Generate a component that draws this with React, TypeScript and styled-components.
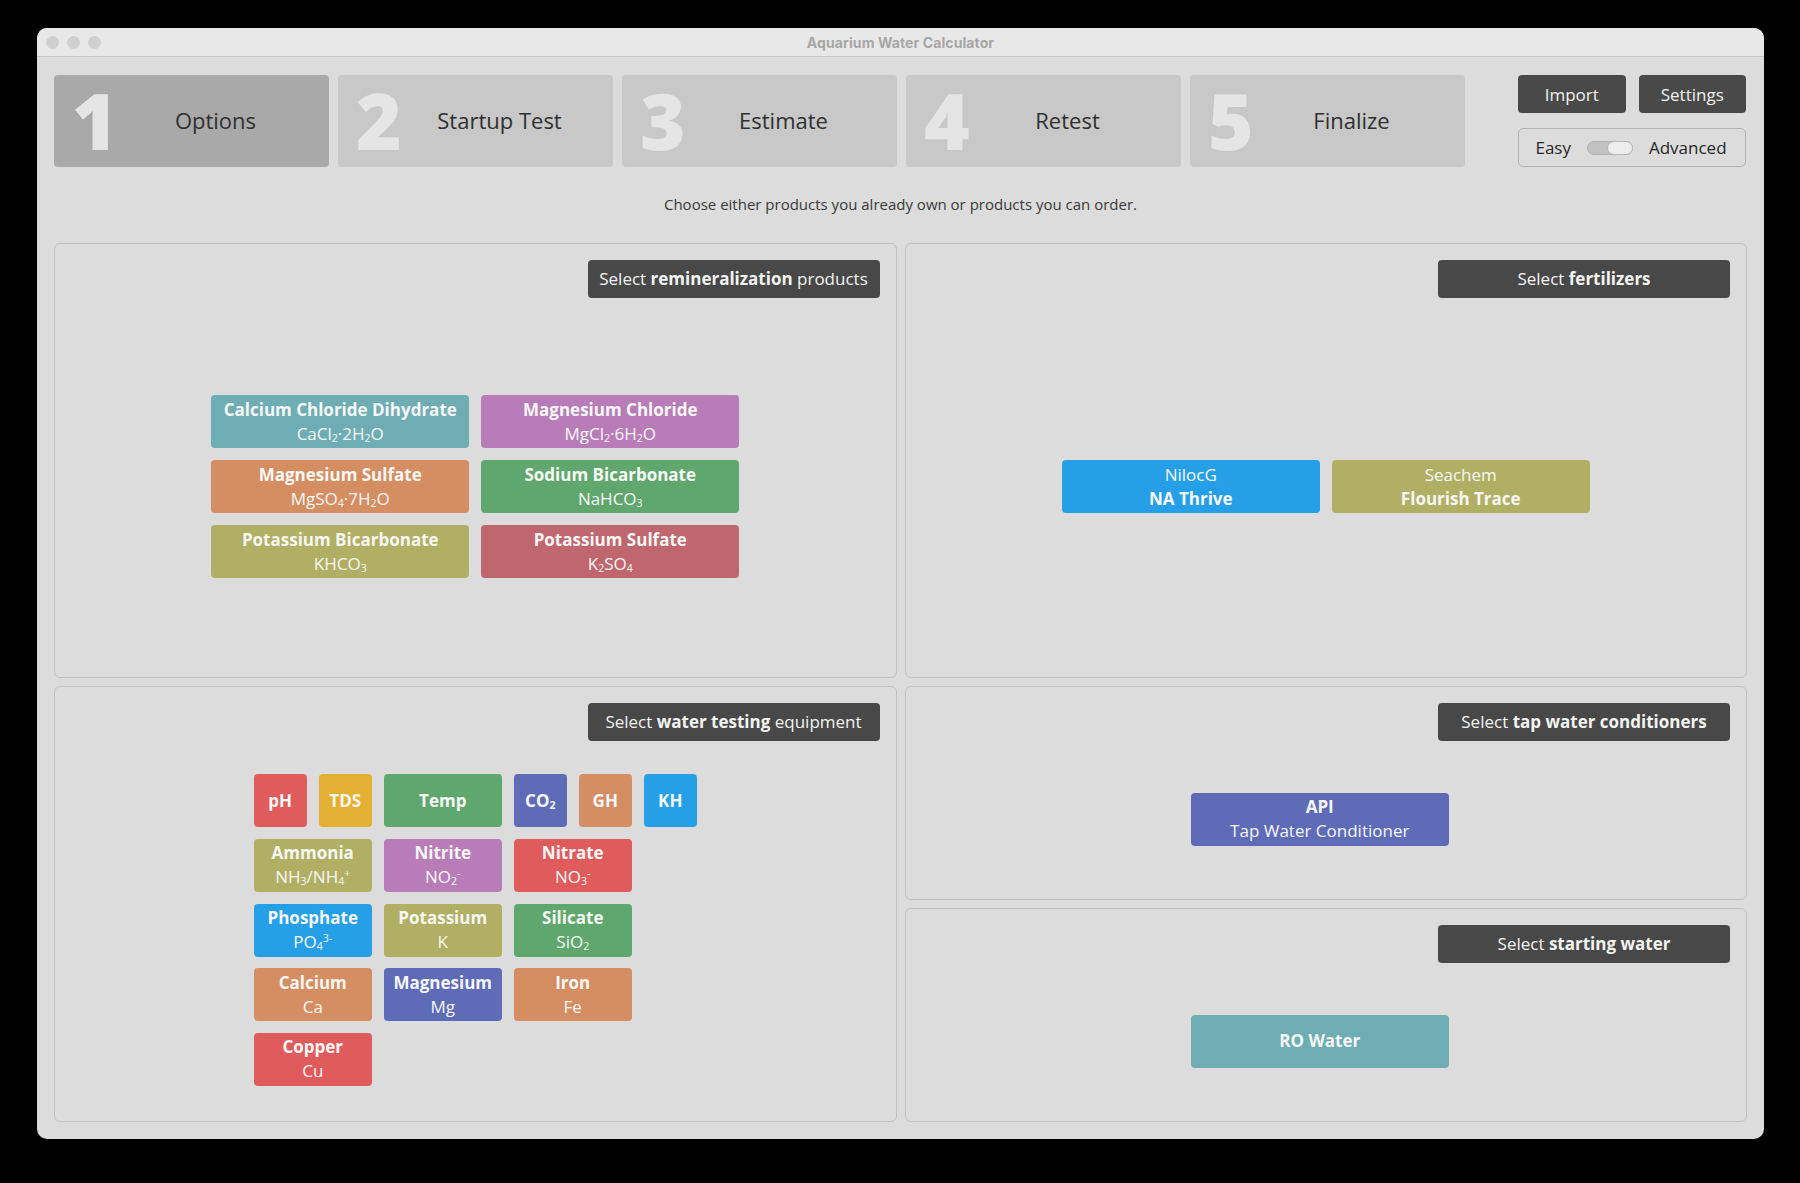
import styled, { createGlobalStyle } from 'styled-components';

const GlobalStyle = createGlobalStyle`
  html, body {
    margin: 0;
    padding: 0;
    background: #000;
  }
  body {
    font-family: "Open Sans", "Noto Sans", sans-serif;
    -webkit-font-smoothing: antialiased;
  }
`;

const palette = {
  teal: '#6eadb4',
  purple: '#b87db8',
  orange: '#d48e62',
  green: '#60a76e',
  olive: '#b1af63',
  rose: '#c0666e',
  red: '#e05c5c',
  yellow: '#e4b032',
  indigo: '#5e6bb7',
  blue: '#25a0e8',
};

type Chip = {
  title: React.ReactNode;
  sub?: React.ReactNode;
  color: string;
  span?: number;
  subFirst?: boolean;
};

const steps = ['Options', 'Startup Test', 'Estimate', 'Retest', 'Finalize'];

const Sub = styled.sub`
  font-size: 0.62em;
  vertical-align: -0.2em;
  line-height: 0;
`;

const Sup = styled.sup`
  font-size: 0.62em;
  vertical-align: 0.55em;
  line-height: 0;
`;

const remineralization: Chip[] = [
  { title: 'Calcium Chloride Dihydrate', sub: <>CaCl<Sub>2</Sub>·2H<Sub>2</Sub>O</>, color: palette.teal },
  { title: 'Magnesium Chloride', sub: <>MgCl<Sub>2</Sub>·6H<Sub>2</Sub>O</>, color: palette.purple },
  { title: 'Magnesium Sulfate', sub: <>MgSO<Sub>4</Sub>·7H<Sub>2</Sub>O</>, color: palette.orange },
  { title: 'Sodium Bicarbonate', sub: <>NaHCO<Sub>3</Sub></>, color: palette.green },
  { title: 'Potassium Bicarbonate', sub: <>KHCO<Sub>3</Sub></>, color: palette.olive },
  { title: 'Potassium Sulfate', sub: <>K<Sub>2</Sub>SO<Sub>4</Sub></>, color: palette.rose },
];

const fertilizers: Chip[] = [
  { title: 'NA Thrive', sub: 'NilocG', color: palette.blue, subFirst: true },
  { title: 'Flourish Trace', sub: 'Seachem', color: palette.olive, subFirst: true },
];

const testing: Chip[] = [
  { title: 'pH', color: palette.red },
  { title: 'TDS', color: palette.yellow },
  { title: 'Temp', color: palette.green, span: 2 },
  { title: <>CO<Sub>2</Sub></>, color: palette.indigo },
  { title: 'GH', color: palette.orange },
  { title: 'KH', color: palette.blue },
  { title: 'Ammonia', sub: <>NH<Sub>3</Sub>/NH<Sub>4</Sub><Sup>+</Sup></>, color: palette.olive, span: 2 },
  { title: 'Nitrite', sub: <>NO<Sub>2</Sub><Sup>-</Sup></>, color: palette.purple, span: 2 },
  { title: 'Nitrate', sub: <>NO<Sub>3</Sub><Sup>-</Sup></>, color: palette.red, span: 2 },
  { title: 'Phosphate', sub: <>PO<Sub>4</Sub><Sup>3-</Sup></>, color: palette.blue, span: 2 },
  { title: 'Potassium', sub: 'K', color: palette.olive, span: 2 },
  { title: 'Silicate', sub: <>SiO<Sub>2</Sub></>, color: palette.green, span: 2 },
  { title: 'Calcium', sub: 'Ca', color: palette.orange, span: 2 },
  { title: 'Magnesium', sub: 'Mg', color: palette.indigo, span: 2 },
  { title: 'Iron', sub: 'Fe', color: palette.orange, span: 2 },
  { title: 'Copper', sub: 'Cu', color: palette.red, span: 2 },
];

const ChipButton = ({ chip }: { chip: Chip }) => (
  <ChipBox $color={chip.color} $span={chip.span ?? 1}>
    {chip.subFirst ? (
      <>
        <ChipLine>{chip.sub}</ChipLine>
        <ChipLine $bold>{chip.title}</ChipLine>
      </>
    ) : (
      <>
        <ChipLine $bold>{chip.title}</ChipLine>
        {chip.sub && <ChipLine>{chip.sub}</ChipLine>}
      </>
    )}
  </ChipBox>
);

const PanelHeader = ({ children }: { children: React.ReactNode }) => (
  <Header>
    <Badge>{children}</Badge>
  </Header>
);

const App = () => {
  return (
    <>
      <GlobalStyle />
      <Stage>
        <Window>
          <TitleBar>
            <Lights>
              <Light />
              <Light />
              <Light />
            </Lights>
            <WindowTitle>Aquarium Water Calculator</WindowTitle>
            <span />
          </TitleBar>

          <Content>
            <TopRow>
              <Steps>
                {steps.map((label, i) => (
                  <Step key={label} $active={i === 0}>
                    <StepNumber>{i + 1}</StepNumber>
                    <StepLabel>{label}</StepLabel>
                  </Step>
                ))}
              </Steps>

              <Controls>
                <ButtonRow>
                  <DarkButton>Import</DarkButton>
                  <DarkButton>Settings</DarkButton>
                </ButtonRow>
                <ModeBox>
                  <span>Easy</span>
                  <Switch>
                    <Knob />
                  </Switch>
                  <span>Advanced</span>
                </ModeBox>
              </Controls>
            </TopRow>

            <Hint>Choose either products you already own or products you can order.</Hint>

            <PanelGrid>
              <Panel>
                <PanelHeader>
                  Select <b>remineralization</b> products
                </PanelHeader>
                <PanelBody>
                  <ProductGrid>
                    {remineralization.map((c, i) => (
                      <ChipButton key={i} chip={c} />
                    ))}
                  </ProductGrid>
                </PanelBody>
              </Panel>

              <Panel>
                <PanelHeader>
                  Select <b>fertilizers</b>
                </PanelHeader>
                <PanelBody>
                  <ProductRow>
                    {fertilizers.map((c, i) => (
                      <ChipButton key={i} chip={c} />
                    ))}
                  </ProductRow>
                </PanelBody>
              </Panel>

              <Panel>
                <PanelHeader>
                  Select <b>water testing</b> equipment
                </PanelHeader>
                <PanelBody>
                  <TestGrid>
                    {testing.map((c, i) => (
                      <ChipButton key={i} chip={c} />
                    ))}
                  </TestGrid>
                </PanelBody>
              </Panel>

              <RightStack>
                <Panel>
                  <PanelHeader>
                    Select <b>tap water conditioners</b>
                  </PanelHeader>
                  <PanelBody $single>
                    <ProductRow>
                      <ChipButton chip={{ title: 'API', sub: 'Tap Water Conditioner', color: palette.indigo }} />
                    </ProductRow>
                  </PanelBody>
                </Panel>
                <Panel>
                  <PanelHeader>
                    Select <b>starting water</b>
                  </PanelHeader>
                  <PanelBody $single>
                    <ProductRow>
                      <ChipButton chip={{ title: 'RO Water', color: palette.teal }} />
                    </ProductRow>
                  </PanelBody>
                </Panel>
              </RightStack>
            </PanelGrid>
          </Content>
        </Window>
      </Stage>
    </>
  );
};

export default App;

const Stage = styled.div`
  width: 1800px;
  height: 1183px;
  padding: 28px 0 0 37px;
  box-sizing: border-box;
`;

const Window = styled.div`
  width: 1727px;
  height: 1111px;
  border-radius: 10px;
  overflow: hidden;
  background: #dcdcdc;
  display: flex;
  flex-direction: column;
`;

const TitleBar = styled.div`
  height: 28px;
  flex-shrink: 0;
  display: grid;
  grid-template-columns: 1fr auto 1fr;
  align-items: center;
  background: #e8e8e8;
  border-bottom: 1px solid #c6c6c6;
`;

const Lights = styled.div`
  display: flex;
  gap: 8px;
  padding-left: 9px;
`;

const Light = styled.span`
  width: 13px;
  height: 13px;
  border-radius: 50%;
  background: #cfcfcf;
`;

const WindowTitle = styled.div`
  font-family: Inter, "Liberation Sans", sans-serif;
  font-weight: 700;
  font-size: 14px;
  letter-spacing: 0.1px;
  color: #a6a6a6;
`;

const Content = styled.div`
  flex: 1;
  display: flex;
  flex-direction: column;
  padding: 18px 17px 17px 17px;
`;

const TopRow = styled.div`
  display: flex;
  gap: 53px;
  height: 92px;
`;

const Steps = styled.div`
  display: flex;
  gap: 9px;
`;

const Step = styled.div<{ $active?: boolean }>`
  width: 275px;
  height: 92px;
  display: flex;
  align-items: center;
  padding: 0 20px;
  box-sizing: border-box;
  border-radius: 4px;
  background: ${({ $active }) => ($active ? '#a9a9a9' : '#c8c8c8')};
`;

const StepNumber = styled.div`
  width: 50px;
  font-size: 78px;
  font-weight: 800;
  line-height: 1;
  color: #e5e5e5;
  margin-top: -2px;
  margin-left: -2px;
`;

const StepLabel = styled.div`
  flex: 1;
  text-align: center;
  font-size: 22px;
  color: #303030;
  margin-top: -2px;
`;

const Controls = styled.div`
  width: 228px;
  display: flex;
  flex-direction: column;
  gap: 15px;
`;

const ButtonRow = styled.div`
  display: flex;
  gap: 13px;
`;

const DarkButton = styled.div`
  flex: 1;
  height: 38px;
  display: flex;
  align-items: center;
  justify-content: center;
  border-radius: 4px;
  background: #494949;
  color: #f2f2f2;
  font-size: 17px;
`;

const ModeBox = styled.div`
  height: 39px;
  box-sizing: border-box;
  border: 1px solid #b3b3b3;
  border-radius: 5px;
  display: flex;
  align-items: center;
  justify-content: center;
  gap: 16px;
  padding-right: 2px;
  font-size: 17px;
  color: #262626;
`;

const Switch = styled.div`
  position: relative;
  width: 46px;
  height: 14px;
  box-sizing: border-box;
  border-radius: 7px;
  background: #c2c2c2;
  border: 1px solid #b0b0b0;
`;

const Knob = styled.div`
  position: absolute;
  right: -1px;
  top: -1px;
  width: 26px;
  height: 14px;
  box-sizing: border-box;
  border-radius: 7px;
  background: #ededed;
  border: 1px solid #b6b6b6;
`;

const Hint = styled.div`
  margin: 27px 0 29px;
  text-align: center;
  font-size: 15px;
  line-height: 20px;
  color: #3a3a3a;
`;

const PanelGrid = styled.div`
  flex: 1;
  display: grid;
  grid-template-columns: 1fr 1fr;
  grid-template-rows: 435px 1fr;
  gap: 8px;
`;

const RightStack = styled.div`
  display: flex;
  flex-direction: column;
  gap: 8px;
`;

const Panel = styled.section`
  flex: 1;
  display: flex;
  flex-direction: column;
  border: 1px solid #c1c1c1;
  border-radius: 6px;
  padding: 16px 16px 17px;
  min-height: 0;
`;

const Header = styled.div`
  display: flex;
  justify-content: flex-end;
`;

const Badge = styled.div`
  width: 292px;
  height: 38px;
  line-height: 38px;
  text-align: center;
  border-radius: 4px;
  background: #484848;
  color: #f4f4f4;
  font-size: 17px;
  white-space: nowrap;

  b {
    font-weight: 700;
  }
`;

const PanelBody = styled.div<{ $single?: boolean }>`
  flex: 1;
  display: flex;
  align-items: center;
  justify-content: center;
  padding-top: 15px;
  padding-right: ${({ $single }) => ($single ? '12px' : '0')};
`;

const ProductGrid = styled.div`
  display: grid;
  grid-template-columns: repeat(2, 258px);
  grid-auto-rows: 53px;
  gap: 12px;
`;

const ProductRow = styled.div`
  display: flex;
  gap: 12px;

  & > * {
    width: 258px;
    height: 53px;
  }
`;

const TestGrid = styled.div`
  display: grid;
  grid-template-columns: repeat(7, 53px);
  grid-auto-rows: 53px;
  column-gap: 12px;
  row-gap: 11.7px;
`;

const ChipBox = styled.div<{ $color: string; $span: number }>`
  grid-column: span ${({ $span }) => $span};
  display: flex;
  flex-direction: column;
  align-items: center;
  justify-content: center;
  border-radius: 4px;
  background: ${({ $color }) => $color};
  color: #f7f7f7;
  font-size: 17px;
  line-height: 24px;
  white-space: nowrap;
`;

const ChipLine = styled.div<{ $bold?: boolean }>`
  font-weight: ${({ $bold }) => ($bold ? 700 : 400)};
`;
